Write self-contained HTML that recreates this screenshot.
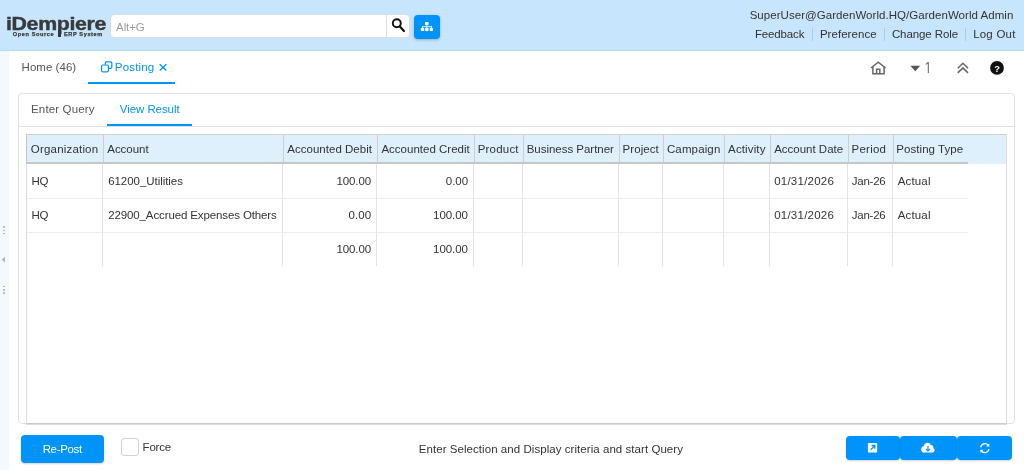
<!DOCTYPE html>
<html><head><meta charset="utf-8"><title>iDempiere</title>
<style>
html,body{margin:0;padding:0}
body{width:1024px;height:470px;overflow:hidden;background:#fff;position:relative;font-family:"Liberation Sans",sans-serif;font-size:11.5px;color:#333}
.a{position:absolute;white-space:nowrap;box-sizing:border-box}
.t{position:absolute;white-space:nowrap;line-height:14px;height:14px}
#hdr{left:0;top:0;width:1024px;height:51px;background:#c7e6fd;border-bottom:1px solid #b3dcf9}
#strip{left:0;top:51px;width:9px;height:419px;background:#f4f9fe}
.dot{position:absolute;left:3.4px;width:1.6px;height:1.6px;background:#aaa;border-radius:1px}
#logo{left:6px;top:13px;font-weight:bold;font-size:18.7px;line-height:22px;color:#3a3a3c;letter-spacing:-0.3px;transform:scaleX(1.14);transform-origin:0 0;-webkit-text-stroke:0.45px #3a3a3c}
.ls{font-weight:bold;font-size:5.6px;line-height:6px;color:#3a3a3c;letter-spacing:0.6px;top:30.8px;-webkit-text-stroke:0.25px #3a3a3c}
#search{left:110px;top:14px;width:300px;height:24px;background:#fff;border:1px solid #dcdcdc;border-radius:4px}
#search .div{position:absolute;left:275px;top:0;width:1px;height:22px;background:#ddd}
#phd{left:116px;top:20px;color:#9a9a9a}
#treebtn{left:414px;top:14.5px;width:26px;height:24px;background:#0093f9;border-radius:4px;box-shadow:0 1px 3px rgba(0,0,0,.25)}
.lnk{color:#333}
.sep{position:absolute;width:1px;height:13px;top:28px;background:#b5c9d8}
#panel{left:18px;top:93px;width:997px;height:331px;border:1px solid #e1e1e1;border-radius:4px}
#tabline{left:19px;top:126px;width:995px;height:1px;background:#e1e1e1}
.blue{color:#0093f9}
.ul{position:absolute;height:2px;background:#0093f9}
#grid{left:26px;top:134px;width:981px;height:290px;border:1px solid #dcdcdc;border-bottom:1px solid #cbcbcb;box-shadow:0 1px 0 #dedede}
#ghead{left:27px;top:135px;width:979px;height:29px;background:#dff0fd}
table{position:absolute;left:27px;top:135px;border-collapse:separate;border-spacing:0;table-layout:fixed;width:941px}
th,td{box-sizing:border-box;padding:0;font-weight:normal;text-align:left;overflow:hidden;white-space:nowrap}
th{height:29px;border-left:1px solid #cfcfcf;border-bottom:2px solid #c6c6c6;padding-left:4px;padding-top:1px;color:#333}
th:first-child{border-left:0;padding-left:5px}
td{height:34px;border-right:1px solid #e3e3e3;border-bottom:1px solid #ededed;padding-left:6px;padding-top:0}
td:last-child{border-right:0}
tr.last td{border-bottom:0;height:33px;padding-bottom:1px}
tbody tr:first-child td{height:35px;padding-top:0}
tbody tr:nth-child(2) td{padding-bottom:2px}
td.r{text-align:right;padding-right:5px}
.btn{position:absolute;background:#0093f9;border-radius:4px;box-sizing:border-box;box-shadow:0 1px 2px rgba(0,0,0,.18)}
.tab{color:#555}
#app{position:absolute;left:0;top:0;width:1024px;height:470px;overflow:hidden;will-change:transform}
</style></head><body><div id="app">
<div class="a" id="hdr"></div>
<div class="a" id="strip"><div class="dot" style="top:175.4px"></div><div class="dot" style="top:178.5px"></div><div class="dot" style="top:181.6px"></div><div class="dot" style="top:234.8px"></div><div class="dot" style="top:238.0px"></div><div class="dot" style="top:241.2px"></div></div>
<svg class="a" style="left:0;top:254px" width="8" height="12" viewBox="0 254 8 12"><path d="M1.9 259.6 L4.9 256.9 V262.4 Z" fill="#aaa"/></svg>
<div class="a" style="left:58.3px;top:30px;width:3.2px;height:6.6px;background:#3a3a3c"></div>
<div class="a" id="logo">iDempiere</div>
<div class="a ls" style="left:12.8px">Open Source</div><div class="a ls" style="left:64px">ERP System</div>
<div class="a" id="search"><div class="div"></div></div>
<div class="t" id="phd"><span id="ph" style="position:relative;left:0.06px;letter-spacing:-0.079px">Alt+G</span></div>
<div class="a" id="treebtn"></div>
<div class="t" style="left:750px;top:8px"><span id="user" style="position:relative;left:-0.35px;letter-spacing:0.046px">SuperUser@GardenWorld.HQ/GardenWorld Admin</span></div>
<div class="t lnk" style="left:756px;top:27px"><span id="fb" style="position:relative;left:-1.12px;letter-spacing:-0.143px">Feedback</span></div><div class="sep" style="left:812px"></div>
<div class="t lnk" style="left:821px;top:27px"><span id="pref" style="position:relative;left:-1.12px;letter-spacing:0.048px">Preference</span></div><div class="sep" style="left:884px"></div>
<div class="t lnk" style="left:893px;top:27px"><span id="role" style="position:relative;left:-1.14px;letter-spacing:-0.089px">Change Role</span></div><div class="sep" style="left:965px"></div>
<div class="t lnk" style="left:974px;top:27px"><span id="out" style="position:relative;left:-0.88px;letter-spacing:0.217px">Log Out</span></div>

<div class="t tab" style="left:22px;top:60px"><span id="home" style="position:relative;left:-0.43px;letter-spacing:0.035px">Home (46)</span></div>
<div class="t blue" style="left:116px;top:60px"><span id="post" style="position:relative;left:-1.16px;letter-spacing:0.160px">Posting</span></div>
<svg class="a" style="left:157px;top:61px" width="12" height="12" viewBox="157 61 12 12"><path d="M159.7 64.2 L166.3 70.5 M166.3 64.2 L159.7 70.5" stroke="#0093f9" stroke-width="1.3" fill="none"/></svg>
<div class="ul" style="left:88px;top:82px;width:87px"></div>

<div class="a" id="panel"></div>
<div class="a" id="tabline"></div>
<div class="t tab" style="left:32px;top:102px"><span id="eq" style="position:relative;left:-0.97px;letter-spacing:0.150px">Enter Query</span></div>
<div class="t blue" style="left:120px;top:102px"><span id="vr" style="position:relative;left:-0.15px;letter-spacing:-0.077px">View Result</span></div>
<div class="ul" style="left:107px;top:124px;width:85px"></div>

<div class="a" id="grid"></div>
<div class="a" id="ghead"></div>
<div class="a" style="left:26px;top:134px;width:981px;height:1px;background:#d0d0d0"></div><div class="a" style="left:26px;top:134px;width:1px;height:30px;background:#c4c4c4"></div>
<table>
<colgroup><col style="width:76px"><col style="width:180px"><col style="width:94px"><col style="width:97px"><col style="width:49px"><col style="width:96px"><col style="width:44px"><col style="width:61px"><col style="width:46px"><col style="width:78px"><col style="width:45px"><col style="width:75px"></colgroup>
<thead><tr><th><span id="h1" style="position:relative;left:-1.20px;letter-spacing:0.190px">Organization</span></th><th><span id="h2" style="position:relative;left:-0.78px;letter-spacing:-0.027px">Account</span></th><th><span id="h3" style="position:relative;left:-0.78px;letter-spacing:0.025px">Accounted Debit</span></th><th><span id="h4" style="position:relative;left:-0.59px;letter-spacing:0.009px">Accounted Credit</span></th><th><span id="h5" style="position:relative;left:-1.36px;letter-spacing:0.215px">Product</span></th><th><span id="h6" style="position:relative;left:-1.34px;letter-spacing:-0.025px">Business Partner</span></th><th><span id="h7" style="position:relative;left:-1.53px;letter-spacing:0.087px">Project</span></th><th><span id="h8" style="position:relative;left:-1.09px;letter-spacing:0.134px">Campaign</span></th><th><span id="h9" style="position:relative;left:-0.93px;letter-spacing:0.134px">Activity</span></th><th><span id="h10" style="position:relative;left:-0.79px;letter-spacing:-0.015px">Account Date</span></th><th><span id="h11" style="position:relative;left:-1.43px;letter-spacing:0.222px">Period</span></th><th><span id="h12" style="position:relative;left:-1.70px;letter-spacing:0.056px">Posting Type</span></th></tr></thead>
<tbody>
<tr><td><span id="a1" style="position:relative;left:-1.42px;letter-spacing:-0.370px">HQ</span></td><td><span id="a2" style="position:relative;left:-0.86px;letter-spacing:-0.044px">61200_Utilities</span></td><td class="r"><span id="a3" style="position:relative;left:-0.01px;letter-spacing:-0.099px">100.00</span></td><td class="r"><span id="a4" style="position:relative;left:0.02px;letter-spacing:-0.034px">0.00</span></td><td></td><td></td><td></td><td></td><td></td><td><span id="a10" style="position:relative;left:-1.88px;letter-spacing:0.247px">01/31/2026</span></td><td><span id="a11" style="position:relative;left:-2.21px;letter-spacing:-0.240px">Jan-26</span></td><td><span id="a12" style="position:relative;left:-1.39px;letter-spacing:0.177px">Actual</span></td></tr>
<tr><td><span id="b1" style="position:relative;left:-1.42px;letter-spacing:-0.370px">HQ</span></td><td><span id="b2" style="position:relative;left:-0.79px;letter-spacing:-0.121px">22900_Accrued Expenses Others</span></td><td class="r"><span id="b3" style="position:relative;left:0.08px;letter-spacing:0.044px">0.00</span></td><td class="r"><span id="b4" style="position:relative;left:-0.09px;letter-spacing:-0.062px">100.00</span></td><td></td><td></td><td></td><td></td><td></td><td><span id="b10" style="position:relative;left:-1.88px;letter-spacing:0.247px">01/31/2026</span></td><td><span id="b11" style="position:relative;left:-2.21px;letter-spacing:-0.240px">Jan-26</span></td><td><span id="b12" style="position:relative;left:-1.39px;letter-spacing:0.177px">Actual</span></td></tr>
<tr class="last"><td></td><td></td><td class="r"><span id="c3" style="position:relative;left:-0.01px;letter-spacing:-0.099px">100.00</span></td><td class="r"><span id="c4" style="position:relative;left:-0.09px;letter-spacing:-0.062px">100.00</span></td><td></td><td></td><td></td><td></td><td></td><td></td><td></td><td></td></tr>
</tbody></table>

<div class="btn" style="left:21px;top:435px;width:83px;height:28px"></div>
<div class="t" style="left:43.5px;top:442px;color:#fff"><span id="rp" style="position:relative;left:-0.88px;letter-spacing:-0.342px">Re-Post</span></div>
<div class="a" style="left:121px;top:438px;width:18px;height:18px;border:1px solid #d2d2d2;border-radius:3px;background:#fff"></div>
<div class="t" style="left:143.5px;top:440px"><span id="force" style="position:relative;left:-0.93px;letter-spacing:-0.206px">Force</span></div>
<div class="t" style="left:420px;top:442px"><span id="msg" style="position:relative;left:-1.19px;letter-spacing:0.053px">Enter Selection and Display criteria and start Query</span></div>
<div class="btn" style="left:846px;top:436px;width:54px;height:24px"></div>
<div class="btn" style="left:900px;top:436px;width:57px;height:24px"></div>
<div class="btn" style="left:957px;top:436px;width:55px;height:24px"></div>

<svg class="a" style="left:388px;top:16px" width="22" height="21" viewBox="388 16 22 21"><circle cx="396.8" cy="23.3" r="4" fill="none" stroke="#111" stroke-width="1.9"/><path d="M399.8 26.6 L404 31" stroke="#111" stroke-width="2.2" stroke-linecap="round"/></svg>
<svg class="a" style="left:414px;top:15px" width="26" height="24" viewBox="414 15 26 24"><g fill="#fff"><rect x="425" y="21.9" width="3.6" height="3" rx=".6"/><rect x="420.8" y="27.9" width="3.4" height="3" rx=".6"/><rect x="425.1" y="27.9" width="3.4" height="3" rx=".6"/><rect x="429.7" y="27.9" width="3.4" height="3" rx=".6"/><rect x="426.4" y="24.5" width=".9" height="3.6"/><rect x="422.1" y="26.3" width="9.8" height=".9"/><rect x="422.1" y="26.3" width=".9" height="2"/><rect x="431" y="26.3" width=".9" height="2"/></g></svg>
<svg class="a" style="left:868px;top:58px" width="22" height="20" viewBox="868 58 22 20"><g fill="none" stroke="#666" stroke-width="1.5" stroke-linejoin="miter"><path d="M871 68 L878.3 62.2 L885.6 68"/><path d="M872.9 66.8 V73.7 H884.1 V66.8"/><path d="M876.6 73.7 V69.2 H879.8 V73.7"/></g></svg>
<svg class="a" style="left:908px;top:62px" width="14" height="12" viewBox="908 62 14 12"><path d="M910.4 65.8 H920.2 L915.3 71.2 Z" fill="#555"/></svg>
<div class="t" style="left:923.8px;top:59px;font-family:'NanumGothic','Liberation Sans',sans-serif;font-size:13.5px;line-height:18px;height:18px;color:#555">1</div>
<svg class="a" style="left:955px;top:60px" width="16" height="16" viewBox="955 60 16 16"><g fill="none" stroke="#666" stroke-width="1.5"><path d="M957.8 68.3 L962.9 63.3 L968 68.3"/><path d="M957.8 72.9 L962.9 67.9 L968 72.9"/></g></svg>
<svg class="a" style="left:989px;top:60px" width="16" height="16" viewBox="989 60 16 16"><circle cx="997" cy="67.9" r="6.9" fill="#111"/><text x="997" y="71.6" text-anchor="middle" font-family="Liberation Sans, sans-serif" font-weight="bold" font-size="9.3" fill="#fff">?</text></svg>
<svg class="a" style="left:100px;top:60px" width="14" height="14" viewBox="100 60 14 14"><g fill="none" stroke="#0093f9" stroke-width="1.2"><path d="M105.3 64.6 V62.9 Q105.3 61.9 106.3 61.9 H110.8 Q111.8 61.9 111.8 62.9 V67.3 Q111.8 68.3 110.8 68.3 H109"/><rect x="101.6" y="65" width="6.8" height="6.8" rx="1.2"/></g></svg>
<svg class="a" style="left:866px;top:441px" width="14" height="14" viewBox="866 441 14 14"><rect x="867.9" y="442.9" width="9.3" height="9.7" rx="1.2" fill="#fff"/><g stroke="#0093f9" stroke-width="1.3" fill="none"><path d="M870.6 449.9 L874.6 445.7"/><path d="M871.6 445.5 H874.8 V448.8"/></g></svg>
<svg class="a" style="left:920px;top:441px" width="16" height="14" viewBox="920 441 16 14"><path d="M924.2 452.6 a3.2 3.2 0 0 1 -0.6 -6.3 a3.9 3.9 0 0 1 7.3 -1.4 a2.6 2.6 0 0 1 2.4 3 a2.5 2.5 0 0 1 -1 4.7 Z" fill="#fff"/><g stroke="#0093f9" stroke-width="1.2" fill="none"><path d="M928 446 V450.6"/><path d="M926 448.8 L928 450.8 L930 448.8"/></g></svg>
<svg class="a" style="left:978px;top:441px" width="14" height="14" viewBox="978 441 14 14"><g fill="none" stroke="#fff" stroke-width="1.25"><path d="M980.7 447.4 A4.2 4.2 0 0 1 988.2 445.4"/><path d="M988.9 449.0 A4.2 4.2 0 0 1 981.4 451.0"/></g><path d="M989.3 443.6 V446.6 H986.3 Z M980.3 452.8 V449.8 H983.3 Z" fill="#fff"/></svg>
</div></body></html>
